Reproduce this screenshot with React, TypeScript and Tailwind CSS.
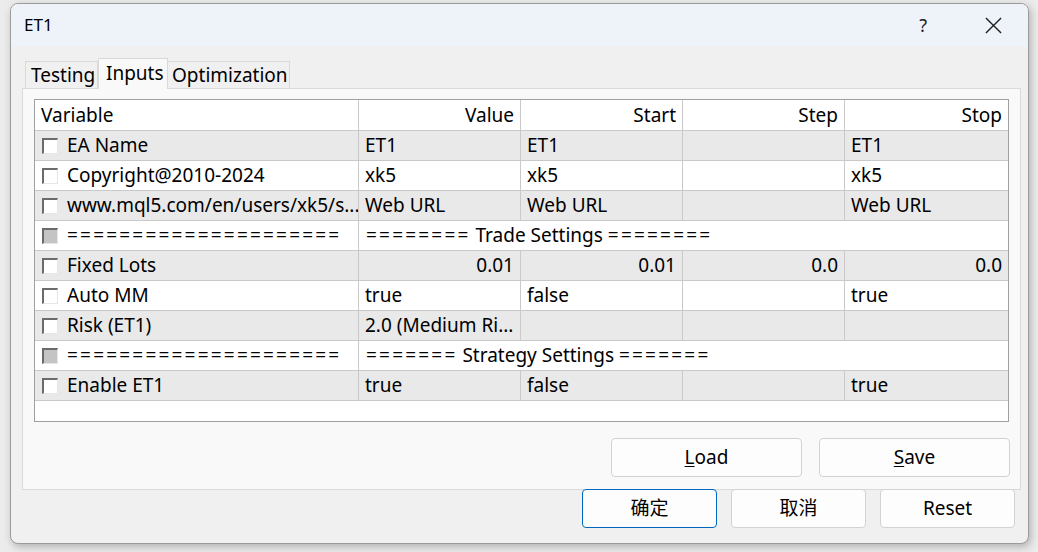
import React from 'react'

type Row = {
  name: string
  value?: string
  start?: string
  step?: string
  stop?: string
  right?: boolean
  sep?: boolean
}

const rows: Row[] = [
  { name: 'EA Name', value: 'ET1', start: 'ET1', step: '', stop: 'ET1' },
  { name: 'Copyright@2010-2024', value: 'xk5', start: 'xk5', step: '', stop: 'xk5' },
  { name: 'www.mql5.com/en/users/xk5/s...', value: 'Web URL', start: 'Web URL', step: '', stop: 'Web URL' },
  { name: '=====================', value: '======== Trade Settings ========', sep: true },
  { name: 'Fixed Lots', value: '0.01', start: '0.01', step: '0.0', stop: '0.0', right: true },
  { name: 'Auto MM', value: 'true', start: 'false', step: '', stop: 'true' },
  { name: 'Risk (ET1)', value: '2.0 (Medium Ri...', start: '', step: '', stop: '' },
  { name: '=====================', value: '======= Strategy Settings =======', sep: true },
  { name: 'Enable ET1', value: 'true', start: 'false', step: '', stop: 'true' },
]

const cols = 'grid grid-cols-[324px_162px_162px_162px_1fr]'

// the '=' runs are wider in the original font, so space them out a bit
function Eq({ text }: { text: string }) {
  const parts = text.split(/(=+)/)
  return (
    <span>
      {parts.map((p, i) =>
        p.startsWith('=') ? (
          <span key={i} className="tracking-[2.2px]">
            {p}
          </span>
        ) : (
          <span key={i}>{p}</span>
        )
      )}
    </span>
  )
}

function Check({ disabled }: { disabled?: boolean }) {
  return (
    <span
      className={`inline-block w-[16px] h-[16px] shrink-0 border-t-2 border-l-2 border-r border-b border-t-[#6b6b6b] border-l-[#6b6b6b] border-r-[#e6e6e6] border-b-[#e6e6e6] ${
        disabled ? 'bg-[#c4c4c4]' : 'bg-white'
      }`}
    />
  )
}

function Cell({ text, right, last }: { text?: string; right?: boolean; last?: boolean }) {
  return (
    <div
      className={`flex items-center px-[6px] whitespace-nowrap overflow-hidden ${right ? 'justify-end' : ''} ${
        last ? '' : 'border-r border-[#c9c9c9]'
      }`}
    >
      {text}
    </div>
  )
}

function Btn({ children, primary, w }: { children: React.ReactNode; primary?: boolean; w: string }) {
  return (
    <button
      className={`${w} h-[39px] rounded-[4px] bg-[#fdfdfd] border text-[19px] text-black ${
        primary ? 'border-[#0067c0]' : 'border-[#d2d2d2]'
      }`}
    >
      {children}
    </button>
  )
}

export default function App() {
  return (
    <div
      className="w-[1038px] h-[552px] bg-[#ececec] pl-[10px] pt-[3px] overflow-hidden"
      style={{ fontFamily: '"Noto Sans", "Noto Sans CJK SC", sans-serif' }}
    >
      <div className="w-[1019px] h-[541px] rounded-[8px] border border-[#9b9b9b] bg-[#f0f0f0] shadow-[2px_3px_8px_rgba(0,0,0,0.25)] overflow-hidden flex flex-col">
        {/* title bar */}
        <div className="h-[42px] bg-[#eef3f9] flex items-center pl-[13px] pr-[26px] text-[17px] text-black">
          <span className="flex-1">ET1</span>
          <span className="text-[18px] text-[#222] mr-[58px]">?</span>
          <svg width="17" height="17" viewBox="0 0 18 18" className="text-[#222]">
            <path d="M1 1 L17 17 M17 1 L1 17" stroke="currentColor" strokeWidth="1.5" />
          </svg>
        </div>

        {/* tabs */}
        <div className="flex items-end pl-[14px] mt-[12px] h-[30px] text-[19px] text-black">
          <div className="h-[27px] px-[5px] border border-b-0 border-[#d9d9d9] bg-[#f0f0f0] flex items-center w-[73px]">
            Testing
          </div>
          <div className="h-[31px] -mb-px z-10 relative px-[7px] border border-b-0 border-[#d9d9d9] bg-[#f9f9f9] flex items-start w-[70px]">
            Inputs
          </div>
          <div className="h-[27px] px-[4px] border border-b-0 border-l-0 border-[#d9d9d9] bg-[#f0f0f0] flex items-center w-[122px]">
            Optimization
          </div>
        </div>

        {/* panel */}
        <div className="ml-[11px] w-[999px] h-[402px] border border-[#dadada] bg-[#f9f9f9] pt-[10px] px-[11px]">
          <div className="h-[323px] border border-[#a0a0a0] bg-white text-[19px] text-black leading-none">
            <div className={`${cols} h-[31px] border-b border-[#c9c9c9]`}>
              <Cell text="Variable" />
              <Cell text="Value" right />
              <Cell text="Start" right />
              <Cell text="Step" right />
              <Cell text="Stop" right last />
            </div>
            {rows.map((r, i) => (
              <div
                key={i}
                className={`${cols} h-[30px] border-b border-[#c9c9c9] ${i % 2 === 0 ? 'bg-[#e9e9e9]' : 'bg-white'}`}
              >
                <div className="flex items-center gap-[9px] pl-[7px] border-r border-[#c9c9c9] whitespace-nowrap overflow-hidden">
                  <Check disabled={r.sep} />
                  {r.sep ? <Eq text={r.name} /> : <span>{r.name}</span>}
                </div>
                {r.sep ? (
                  <div className="col-span-4 flex items-center px-[7px] whitespace-nowrap">
                    <Eq text={r.value || ''} />
                  </div>
                ) : (
                  <>
                    <Cell text={r.value} right={r.right} />
                    <Cell text={r.start} right={r.right} />
                    <Cell text={r.step} right={r.right} />
                    <Cell text={r.stop} right={r.right} last />
                  </>
                )}
              </div>
            ))}
          </div>
          <div className="flex justify-end gap-[17px] mt-[16px] -mr-px">
            <Btn w="w-[191px]">
              <span className="underline underline-offset-2">L</span>oad
            </Btn>
            <Btn w="w-[191px]">
              <span className="underline underline-offset-2">S</span>ave
            </Btn>
          </div>
        </div>

        {/* bottom buttons */}
        <div className="flex justify-end gap-[14px] pr-[13px] -mt-px">
          <Btn w="w-[135px]" primary>确定</Btn>
          <Btn w="w-[135px]">取消</Btn>
          <Btn w="w-[135px]">Reset</Btn>
        </div>
      </div>
    </div>
  )
}
